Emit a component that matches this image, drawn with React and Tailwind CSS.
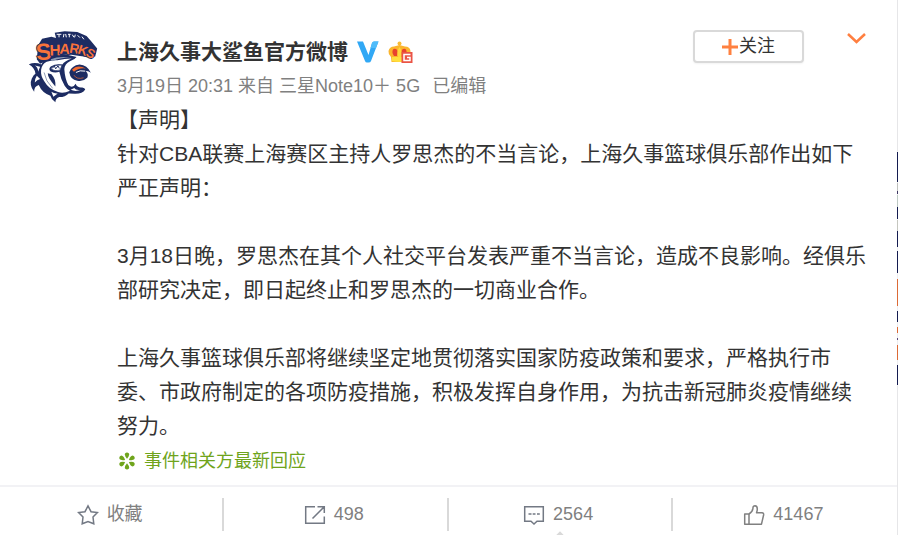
import { useState } from "react";

const paragraphs = [
  "【声明】",
  "针对CBA联赛上海赛区主持人罗思杰的不当言论，上海久事篮球俱乐部作出如下严正声明：",
  "",
  "3月18日晚，罗思杰在其个人社交平台发表严重不当言论，造成不良影响。经俱乐部研究决定，即日起终止和罗思杰的一切商业合作。",
  "",
  "上海久事篮球俱乐部将继续坚定地贯彻落实国家防疫政策和要求，严格执行市委、市政府制定的各项防疫措施，积极发挥自身作用，为抗击新冠肺炎疫情继续努力。",
];

// letters follow the arc above the shark
const sharkLetters = [
  { char: "S", x: 66, y: 122, size: 70, rotate: -6 },
  { char: "H", x: 105, y: 107, size: 46, rotate: -2 },
  { char: "A", x: 134, y: 101, size: 44, rotate: 4 },
  { char: "R", x: 162, y: 98, size: 42, rotate: 10 },
  { char: "K", x: 187, y: 100, size: 40, rotate: 18 },
  { char: "S", x: 211, y: 107, size: 38, rotate: 26 },
];

function SharksLogo() {
  return (
    <svg viewBox="40 30 210 220" className="w-[70px] h-[73px]" role="img" aria-label="Sharks">
      <path
        d="M76 132 L66 118 L70 76 L82 56 L110 50 L124 54 L120 38 L150 34 L188 36 L216 48 L228 62 L248 86 L242 110 L226 112 L196 108 L165 104 L130 106 L112 116 Z"
        fill="#1d2c62"
      />
      <path
        d="M126 43 H140 M133 43 V52 M146 52 L148 42 M153 42 L155 52 M160 43 H168 M164 43 V52 M173 44 L178 52 M182 44 L180 52 M189 46 L196 53 M202 50 L208 58"
        fill="none"
        stroke="#fff"
        strokeWidth="3"
      />
      <path
        d="M42 133 Q62 126 80 134 Q88 114 112 107 Q142 98 186 111 Q180 119 166 124 Q150 132 149 148 Q151 177 161 196 Q174 208 183 192 Q188 205 203 203 Q211 205 212 209 Q203 223 180 222 L162 221 Q152 232 134 232 Q122 236 122 248 Q110 240 107 228 Q82 220 72 196 Q58 200 58 216 Q42 196 51 176 Q57 164 62 162 Q61 144 42 133 Z"
        fill="#1d2c62"
      />
      <path
        d="M79 150 Q82 132 96 126 Q110 120 128 121 Q150 116 172 116 Q150 124 143 134 Q124 130 108 140 Q100 148 108 155 Q120 160 134 156 Q138 178 150 198 Q156 208 166 213 Q147 222 130 217 Q102 209 88 184 Q77 168 79 150 Z"
        fill="#fff"
      />
      <path d="M108 118 Q132 108 170 113 Q140 112 112 124 Z" fill="#8f9bb5" />
      <path d="M108 147 Q118 134 142 136 L136 151 Q120 156 108 147 Z" fill="#fff" stroke="#1d2c62" strokeWidth="2" />
      <path d="M112 146 L119 139 L123 147 L130 138 L134 146" fill="none" stroke="#1d2c62" strokeWidth="3" />
      <path d="M88 158 Q92 184 114 206" fill="none" stroke="#8f9bb5" strokeWidth="3" />
      <path d="M99 160 Q99 174 122 200 Q124 178 110 163 Z" fill="#1d2c62" />
      <path d="M66 168 Q60 177 60 188 Q67 181 76 178 Z M60 137 Q70 142 70 156 L76 141 Z" fill="#fff" />
      <path d="M110 216 Q119 222 129 221 L116 231 Z M168 210 Q183 217 199 210 Q184 213 179 205 Z" fill="#fff" />
      <path
        d="M164 157 Q171 137 195 134 Q218 135 229 159 Q220 152 214 154 Q223 162 218 174 Q205 187 188 183 Q167 179 164 157 Z"
        fill="#1d2c62"
      />
      <path d="M172 150 Q188 132 214 146 Q192 143 178 156 Z" fill="#f26a2e" />
      <path d="M184 158 Q196 150 212 154" fill="none" stroke="#fff" strokeWidth="3" />
      <path d="M178 166 Q186 180 207 174" fill="none" stroke="#f26a2e" strokeWidth="2" />
      <g fontFamily="Liberation Sans, sans-serif" fontWeight="700" fill="#f9733a" stroke="#1d2c62" strokeWidth="5" paintOrder="stroke">
        {sharkLetters.map((l, i) => (
          <text key={i} x={l.x} y={l.y} fontSize={l.size} transform={`rotate(${l.rotate} ${l.x} ${l.y})`}>
            {l.char}
          </text>
        ))}
      </g>
    </svg>
  );
}

function VerifiedIcon() {
  return (
    <svg viewBox="0 0 22 22" className="w-[22px] h-[22px]" aria-hidden="true">
      <path d="M0 .5 H6 L11.500 14 L15 2 Q15.500 .5 17 .5 H21.500 L14 20 Q13.500 21.500 11.500 21.500 H10 Q8.500 21.500 8 20 Z" fill="#31a8f5" />
      <path d="M15 2 Q15.500 .5 17 .5 H21.500 L19 7 L13.500 7 Z" fill="#4fbcfa" />
    </svg>
  );
}

function CrownIcon() {
  return (
    <svg viewBox="0 0 25 22" className="w-[25px] h-[22px]" aria-hidden="true">
      <circle cx="11.500" cy="2.500" r="2" fill="#f9bc35" />
      <path
        d="M3.500 21 L3 16 Q0 13 .5 10 Q1.500 5.500 6 5.500 Q9 4.500 11.500 4 Q14 4.500 17 5.500 Q22 5.500 22.500 10 Q23 13 20 16 V21 Z"
        fill="#fbb52d"
      />
      <path d="M5.500 8 Q8.500 7 9.500 10 L9 15 H6 Q3 11 5.500 8 Z M17.500 8 Q14.500 7 13.500 10 L14 15 H17 Q20 11 17.500 8 Z" fill="#e8432e" />
      <path d="M11.500 6 Q15 11 12.500 17 H10.500 Q8 11 11.500 6 Z" fill="#ffd83e" />
      <path d="M4 16 H19 V20 Q12 22 4 20 Z" fill="#ffe03e" />
      <rect x="13.500" y="11" width="11" height="11" fill="#ea5446" />
      <path d="M22.500 13.500 H16 V19.500 H22 V16.500 H19" fill="none" stroke="#fff" strokeWidth="1.500" />
    </svg>
  );
}

function FlowerIcon() {
  return (
    <svg viewBox="0 0 18 18" className="w-[18px] h-[18px]" fill="#6fa41c" aria-hidden="true">
      {[0, 60, 120, 180, 240, 300].map((angle) => (
        <path key={angle} d="M9 6.800 Q6.200 3.500 7 1.500 Q9 -.6 11 1.500 Q11.800 3.500 9 6.800 Z" transform={`rotate(${angle} 9 9)`} />
      ))}
    </svg>
  );
}

function StarIcon() {
  return (
    <svg viewBox="0 0 22 22" className="w-[22px] h-[22px]" fill="none" stroke="#737984" strokeWidth="1.500" aria-hidden="true">
      <path d="M11 1.800 L14 7.700 L20.400 8.600 L16 13 L16.800 19.800 L11 17.500 L5.200 19.800 L6 13 L1.600 8.600 L8 7.700 Z" />
    </svg>
  );
}

function ShareIcon() {
  return (
    <svg viewBox="0 0 22 22" className="w-[22px] h-[22px]" fill="none" stroke="#737984" strokeWidth="1.500" aria-hidden="true">
      <path d="M11 2.700 H1.700 V19.300 H20.300 V12.500" />
      <path d="M8.500 14.500 L20 3 M13.500 2.700 H20.300 V9" />
    </svg>
  );
}

function CommentIcon() {
  return (
    <svg viewBox="0 0 22 22" className="w-[22px] h-[22px]" fill="none" stroke="#737984" strokeWidth="1.500" aria-hidden="true">
      <path d="M1.700 2.700 H20.300 V17.300 H14 L11 20 L8 17.300 H1.700 Z" />
      <path d="M5.500 10 H8.500 M9.700 10 H12.500 M14 10 H16.800" />
    </svg>
  );
}

function LikeIcon() {
  return (
    <svg viewBox="0 0 22 22" className="w-[22px] h-[22px]" fill="none" stroke="#808080" strokeWidth="1.500" strokeLinejoin="round" aria-hidden="true">
      <path d="M1.700 10 H6 V20.200 H1.700 Z" />
      <path d="M6 10 Q10 7.500 10 3.500 Q10 1.800 12 1.800 Q14.300 2 14.300 5 Q14.300 7 13.500 8.700 H19 Q21 9 20.600 11 L18.500 20.200 H6" />
    </svg>
  );
}

// edge of the club banner behind the card
const bannerBands = [
  [0, 151, "#e6e6e8"],
  [152, 30, "#141b50"],
  [183, 8, "#bfc1bd"],
  [191, 3, "#3c3563"],
  [195, 12, "#bdc9c3"],
  [207, 12, "#141b50"],
  [220, 11, "#c5c6bf"],
  [231, 16, "#141b50"],
  [251, 22, "#141b50"],
  [279, 27, "#dc6a36"],
  [311, 11, "#141b50"],
  [327, 6, "#dc6a36"],
  [338, 2, "#5b487b"],
  [345, 15, "#dc6a36"],
  [365, 20, "#141b50"],
  [386, 149, "#e6e6e8"],
];

function BannerEdge() {
  return (
    <svg viewBox="0 0 1 535" preserveAspectRatio="none" className="w-px shrink-0 self-stretch bg-[#ededf0]" aria-hidden="true">
      {bannerBands.map(([y, height, color]) => (
        <rect key={y} x="0" y={y} width="1" height={height} fill={color} />
      ))}
    </svg>
  );
}

const actions = [
  { label: "收藏", icon: StarIcon },
  { label: "498", icon: ShareIcon },
  { label: "2564", icon: CommentIcon, open: true },
  { label: "41467", icon: LikeIcon },
];

function App() {
  const [followed, setFollowed] = useState(false);

  return (
    <div className="flex min-h-screen overflow-hidden bg-white font-['Liberation_Sans','Noto_Sans_CJK_SC',sans-serif] text-[#333]">
      <article className="flex flex-col flex-1 min-w-0">
        <div className="flex gap-[19px] pt-[30px] px-7 pb-1.5">
          <a href="#club" className="shrink-0 w-[70px]">
            <SharksLogo />
          </a>

          <div className="flex-1 min-w-0">
            <header className="flex items-start">
              <div className="flex-1 pt-[5px]">
                <div className="flex items-center gap-[9px] h-[34px]">
                  <a href="#club" className="text-[21px] leading-[34px] font-bold">
                    上海久事大鲨鱼官方微博
                  </a>
                  <VerifiedIcon />
                  <CrownIcon />
                </div>
                <p className="flex gap-3 text-[18px] leading-[34px] text-[#808080]">
                  <span>3月19日 20:31 来自 三星Note10＋ 5G</span>
                  <span>已编辑</span>
                </p>
              </div>
              <button
                onClick={() => setFollowed(!followed)}
                className="flex items-center justify-center w-[111px] h-[33px] border-2 border-[#d9d9d9] rounded-sm bg-white text-[18px] shadow-xs"
              >
                {!followed && (
                  <svg viewBox="0 0 16 16" className="w-4 h-4 mr-px" stroke="#ff8140" strokeWidth="3" aria-hidden="true">
                    <path d="M8 0 V16 M0 8 H16" />
                  </svg>
                )}
                {followed ? "已关注" : "关注"}
              </button>
              <button aria-label="更多" className="ml-[42px] mr-[3px]">
                <svg viewBox="0 0 20 16" className="w-5 h-4" fill="none" stroke="#ff7f40" strokeWidth="2.500" aria-hidden="true">
                  <path d="M2 4 L10.500 12 L19 4" />
                </svg>
              </button>
            </header>

            <div className="text-[21px] leading-[34px]">
              {paragraphs.map((text, i) => (
                <p key={i} className="min-h-[34px]">
                  {text}
                </p>
              ))}
            </div>

            <a href="#response" className="flex items-center gap-2 pl-px text-[18px] leading-[36px] text-[#6fa41c]">
              <FlowerIcon />
              事件相关方最新回应
            </a>
          </div>
        </div>

        <footer className="grid grid-cols-4 border-t-2 border-[#f2f2f5] pt-[11px] pb-1 divide-x-2 divide-[#d9d9d9]">
          {actions.map(({ label, icon: Icon, open }) => (
            <button key={label} className="relative flex items-center justify-center gap-2 h-[33px] pr-[3px] text-[18px] text-[#808080]">
              <Icon />
              {label}
              {open && <span className="absolute top-[35px] left-1/2 w-2 h-2 -translate-x-1/2 rotate-45 bg-[#d9d9d9]"></span>}
            </button>
          ))}
        </footer>
      </article>
      <BannerEdge />
    </div>
  );
}

export default App;
